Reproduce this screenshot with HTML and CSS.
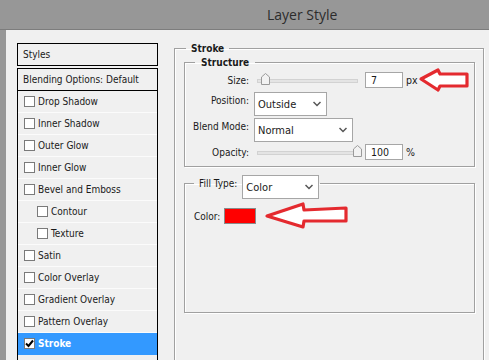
FILE: index.html
```html
<!DOCTYPE html>
<html>
<head>
<meta charset="utf-8">
<title>Layer Style</title>
<link rel="stylesheet" href="styles.css">
</head>
<body>
<div class="titlebar"><span class="title">Layer Style</span></div>
<div class="dialog">
  <div class="sidebar">
    <div class="styles-head">Styles</div>
    <ul class="styles-list">
      <li class="blend">Blending Options: Default</li>
      <li><span class="cb"></span>Drop Shadow</li>
      <li><span class="cb"></span>Inner Shadow</li>
      <li><span class="cb"></span>Outer Glow</li>
      <li><span class="cb"></span>Inner Glow</li>
      <li><span class="cb"></span>Bevel and Emboss</li>
      <li class="sub"><span class="cb"></span>Contour</li>
      <li class="sub"><span class="cb"></span>Texture</li>
      <li><span class="cb"></span>Satin</li>
      <li><span class="cb"></span>Color Overlay</li>
      <li><span class="cb"></span>Gradient Overlay</li>
      <li><span class="cb"></span>Pattern Overlay</li>
      <li class="active"><span class="cb"><svg width="9" height="9" viewBox="0 0 9 9"><path d="M1 4.5 L3.5 7 L8 1.5" fill="none" stroke="#000" stroke-width="2"/></svg></span>Stroke</li>
      <li></li>
    </ul>
  </div>
  <div class="main">
    <fieldset class="group stroke-group">
      <legend class="legend-stroke">Stroke</legend>
      <fieldset class="group structure">
        <legend class="legend-structure">Structure</legend>
        <div class="row">
          <span class="lbl">Size:</span>
          <div class="slider"><div class="track"></div><svg class="thumb thumb-min" width="9" height="12" viewBox="0 0 9 12"><path d="M0.5 11.5 V4 L4.5 0.5 L8.5 4 V11.5 Z" fill="#f2f2f2" stroke="#9a9a9a"/></svg></div>
          <span class="num">7</span>
          <span class="unit">px</span>
        </div>
        <div class="row row-select pos">
          <span class="lbl">Position:</span>
          <div class="select w-pos"><span>Outside</span><svg width="8" height="6" viewBox="0 0 8 6"><path d="M0.5 1 L4 4.5 L7.5 1" fill="none" stroke="#555" stroke-width="1.5"/></svg></div>
        </div>
        <div class="row row-select blendrow">
          <span class="lbl">Blend Mode:</span>
          <div class="select w-blend"><span>Normal</span><svg width="8" height="6" viewBox="0 0 8 6"><path d="M0.5 1 L4 4.5 L7.5 1" fill="none" stroke="#555" stroke-width="1.5"/></svg></div>
        </div>
        <div class="row opac">
          <span class="lbl">Opacity:</span>
          <div class="slider"><div class="track"></div><svg class="thumb thumb-max" width="9" height="12" viewBox="0 0 9 12"><path d="M0.5 11.5 V4 L4.5 0.5 L8.5 4 V11.5 Z" fill="#f2f2f2" stroke="#9a9a9a"/></svg></div>
          <span class="num">100</span>
          <span class="unit">%</span>
        </div>
      </fieldset>
      <fieldset class="group fill">
        <legend class="legend-fill"><span class="fill-lbl">Fill Type:</span><div class="select w-fill"><span>Color</span><svg width="8" height="6" viewBox="0 0 8 6"><path d="M0.5 1 L4 4.5 L7.5 1" fill="none" stroke="#555" stroke-width="1.5"/></svg></div></legend>
        <div class="fill-body">
          <div class="color-row"><span>Color:</span><span class="swatch"></span></div>
        </div>
      </fieldset>
    </fieldset>
  </div>
</div>
<svg class="annot" width="489" height="360" viewBox="0 0 489 360">
  <path d="M421 79 L438 70 L440 74 L467 74 L467 86 L440 86 L438 90 Z" fill="#fff" stroke="#e42a2f" stroke-width="3.2" stroke-linejoin="round"/>
  <path d="M267 216 L303 204 L304 210 L346 208 L346 221 L304 221 L303 227 Z" fill="#fff" stroke="#e42a2f" stroke-width="3.2" stroke-linejoin="round"/>
</svg>
</body>
</html>
```
FILE: styles.css
```css
* { box-sizing: border-box; }
html, body { margin: 0; padding: 0; }
body {
  width: 489px;
  height: 360px;
  overflow: hidden;
  position: relative;
  background: #979797;
  font-family: "DejaVu Sans Condensed", "DejaVu Sans", sans-serif;
  font-size: 10px;
  color: #1a1a1a;
}
.titlebar {
  height: 30px;
  border-bottom: 1px solid #7d7d7d;
  display: flex;
  align-items: center;
  padding-left: 267px;
}
.title {
  font-family: "Open Sans", "Noto Sans", sans-serif;
  font-size: 14px;
  color: #2c2c2c;
}
.dialog {
  margin-left: 6px;
  height: 330px;
  background: #f0f0f0;
  display: flex;
  overflow: hidden;
}
.sidebar {
  width: 152px;
  padding: 13px 0 0 11px;
  flex: none;
}
.styles-head {
  border: 1px solid #000;
  height: 23px;
  padding-left: 5px;
  line-height: 21px;
}
.styles-list {
  list-style: none;
  margin: 2px 0 0;
  padding: 0;
  border: 1px solid #000;
  border-bottom: none;
}
.styles-list li {
  height: 22px;
  border-bottom: 1px solid #fbfbfb;
  display: flex;
  align-items: center;
  padding-left: 6px;
  white-space: nowrap;
}
.styles-list li.blend {
  border-bottom-color: #000;
  padding-left: 5px;
}
.styles-list li.sub { padding-left: 19px; }
.styles-list li.active {
  background: #3399ff;
  color: #fff;
  font-weight: bold;
  border-bottom-color: #3399ff;
}
.cb {
  width: 11px;
  height: 11px;
  border: 1px solid #7a7a7a;
  background: #fff;
  margin-right: 3px;
  flex: none;
  display: flex;
  align-items: center;
  justify-content: center;
}
.main {
  flex: 1;
  padding: 12px 0 0 16px;
}
.group {
  margin: 0;
  padding: 0;
  min-width: 0;
  border: 1px solid #a0a0a0;
  box-shadow: 1px 1px 0 #fff, inset 1px 1px 0 #fff;
}
legend {
  line-height: 13px;
  height: 13px;
}
.stroke-group {
  width: 310px;
  padding-bottom: 80px;
}
.legend-stroke {
  font-weight: bold;
  margin-left: 11px;
  padding: 0 5px;
}
.structure {
  margin: 1px 8px 0 9px;
  padding: 0 0 6px 0;
}
.legend-structure {
  font-weight: bold;
  margin-left: 10px;
  padding: 0 6px;
}
.row {
  display: flex;
  align-items: center;
  height: 16px;
  margin-top: 3px;
}
.row-select { height: 24px; align-items: flex-start; }
.row.pos { margin-top: 4px; }
.row.blendrow { margin-top: 2px; }
.row.opac { margin-top: 2px; }
.lbl {
  width: 64px;
  text-align: right;
  flex: none;
  white-space: nowrap;
}
.row-select .lbl { line-height: 18px; }
.slider {
  position: relative;
  width: 101px;
  height: 16px;
  margin-left: 8px;
  display: flex;
  align-items: center;
}
.track {
  width: 100%;
  height: 4px;
  margin-top: 2px;
  background: #e4e4e4;
  border: 1px solid #d2d2d2;
}
.thumb { position: absolute; top: 1px; }
.thumb-min { left: 4px; }
.thumb-max { left: 96px; }
.num {
  width: 38px;
  height: 16px;
  margin-left: 7px;
  border: 1px solid #a6a6a6;
  background: #fff;
  padding-left: 5px;
  line-height: 14px;
  font-size: 10.5px;
}
.unit { margin-left: 3px; font-size: 10.5px; }
.select {
  height: 24px;
  border: 1px solid #a6a6a6;
  background: #fff;
  margin-left: 5px;
  display: flex;
  align-items: center;
  justify-content: space-between;
  padding: 0 5px 0 3px;
  font-size: 11px;
}
.w-pos { width: 73px; }
.w-blend { width: 99px; }
.w-fill { width: 77px; margin-left: 5px; margin-top: -2px; }
.fill {
  margin: 10px 8px 0 9px;
  padding: 0;
}
.legend-fill {
  display: flex;
  align-items: flex-start;
  margin-left: 9px;
  padding: 0 1px 0 5px;
}
.fill-lbl { white-space: nowrap; }
.fill-body {
  height: 122px;
  padding: 18px 0 0 9px;
}
.color-row {
  display: flex;
  align-items: center;
  gap: 4px;
}
.swatch {
  width: 32px;
  height: 16px;
  background: #ff0000;
  border: 1px solid #8a8a8a;
}
.annot {
  position: absolute;
  left: 0;
  top: 0;
  pointer-events: none;
}
```
